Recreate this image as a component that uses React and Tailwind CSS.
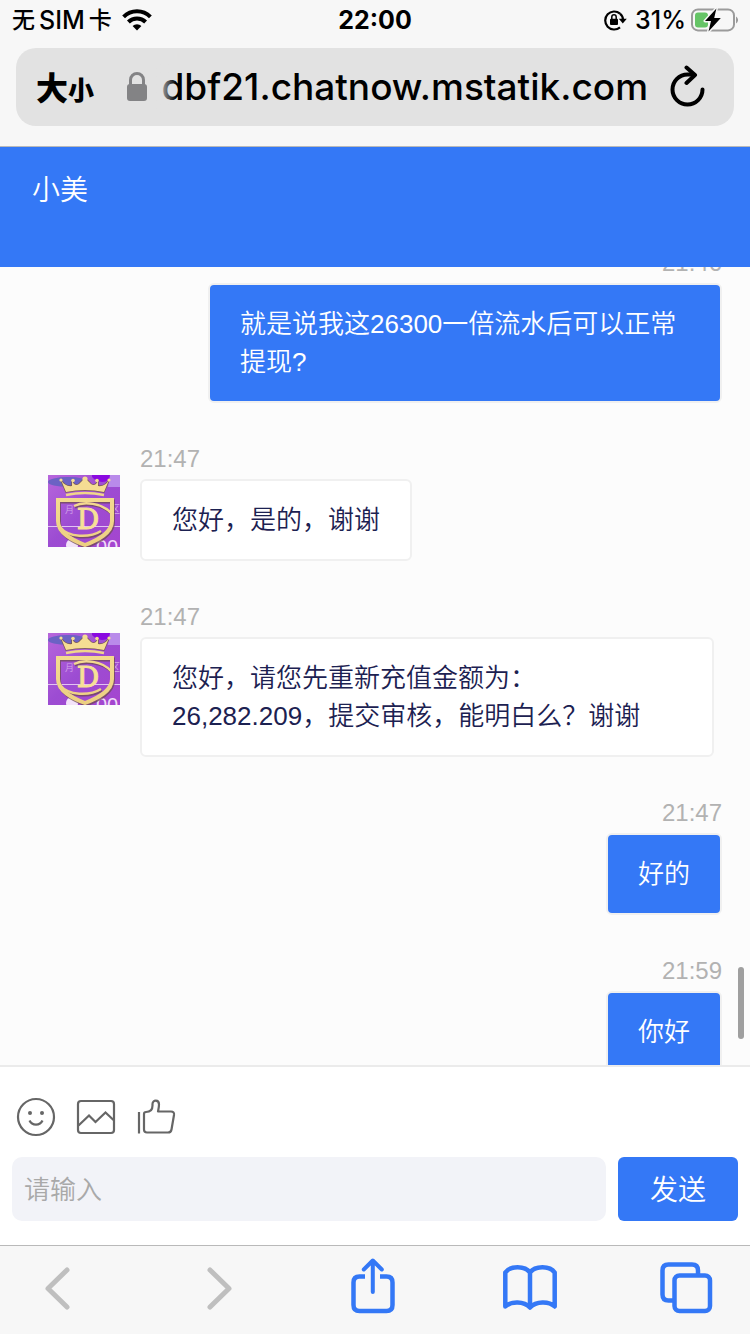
const messages = [
  { id: 1, own: true, time: '21:46', text: '就是说我这26300一倍流水后可以正常提现?' },
  { id: 2, own: false, time: '21:47', text: '您好，是的，谢谢' },
  { id: 3, own: false, time: '21:47', text: '您好，请您先重新充值金额为：26,282.209，提交审核，能明白么？谢谢' },
  { id: 4, own: true, time: '21:47', text: '好的' },
  { id: 5, own: true, time: '21:59', text: '你好' },
]

function StatusBar() {
  return (
    <div className="grid h-12 grid-cols-3 items-center px-3 pb-2 font-['Inter','Noto_Sans_CJK_SC',sans-serif] text-[25px] leading-8 font-medium text-black">
      <div className="flex items-center gap-2.5">
        <span className="flex gap-1 whitespace-nowrap">
          <span className="text-[23px]">无</span>
          <span>SIM</span>
          <span className="text-[23px]">卡</span>
        </span>
        <svg width="30" height="22" viewBox="0 0 30 22" fill="none" stroke="#000" strokeWidth="4">
          <path d="M1.6 7.8A19 19 0 0 1 28.4 7.8" />
          <path d="M6.4 13A12.2 12.2 0 0 1 23.6 13" />
          <path d="M15 21.5L10.6 17.1A6.3 6.3 0 0 1 19.4 17.1Z" fill="#000" stroke="none" />
        </svg>
      </div>
      <span className="text-center font-bold">22:00</span>
      <div className="flex items-center justify-end">
        <svg className="mr-2 shrink-0" width="24" height="22" viewBox="0 0 24 22" fill="none">
          <path d="M17 4.6A9 9 0 1 0 17 18.4" stroke="#000" strokeWidth="2.2" />
          <path d="M17 4.6Q20 7 20 11" stroke="#000" strokeWidth="2.2" />
          <path d="M15.8 9.8H23.8L19.8 14.4Z" fill="#000" />
          <rect x="7" y="9.8" width="8" height="6.2" rx="1" fill="#000" />
          <path d="M8.8 10V8A2.2 2.2 0 0 1 13.2 8V10" stroke="#000" strokeWidth="1.5" />
        </svg>
        <span>31%</span>
        <svg className="ml-1 shrink-0" width="48" height="24" viewBox="0 0 48 24">
          <rect x="2" y="1.4" width="42" height="21" rx="6" fill="none" stroke="#9b9b9b" strokeWidth="2" />
          <path d="M46 8.5A4 4 0 0 1 46 15.5Z" fill="#9b9b9b" />
          <rect x="5" y="4.4" width="13" height="15" rx="3" fill="#65c466" />
          <path d="M26.4 0.5L15 13H21L18.5 23.5L30.8 10H24.2Z" fill="#000" stroke="#f7f7f7" strokeWidth="3" paintOrder="stroke" strokeLinejoin="round" />
        </svg>
      </div>
    </div>
  )
}

function AddressBar() {
  return (
    <div className="mx-4 flex h-[78px] items-center rounded-[20px] bg-[#e2e2e2] px-5 text-black">
      <button className="flex shrink-0 items-baseline font-['Noto_Sans_CJK_SC',sans-serif] text-[32px] leading-10 font-black">
        大<span className="text-[26px]">小</span>
      </button>
      <svg className="ml-8 shrink-0" width="22" height="30" viewBox="0 0 22 30">
        <rect x="1" y="12" width="20" height="17" rx="3" fill="#838385" />
        <path d="M4.5 13V8A6.5 6.5 0 0 1 17.5 8V13" fill="none" stroke="#838385" strokeWidth="3" />
      </svg>
      <div className="relative ml-2 min-w-0 grow">
        <span className="flex justify-end font-['Inter',sans-serif] text-[37px] leading-[52px] font-medium whitespace-nowrap">
          dbf21.chatnow.mstatik.com
        </span>
        <span className="absolute inset-y-0 left-0 w-5 bg-linear-to-r from-[#e2e2e2] to-transparent" />
      </div>
      <button aria-label="刷新" className="mr-2 ml-5 shrink-0">
        <svg width="38" height="44" viewBox="0 0 38 44" fill="none" stroke="#000" strokeWidth="4" strokeLinecap="round" strokeLinejoin="round">
          <path d="M25 9.5H19.5A15 15 0 1 0 34.5 24.5" />
          <path d="M18.5 2.5L27 10L18.5 18" />
        </svg>
      </button>
    </div>
  )
}

function Avatar() {
  return (
    <svg className="mt-9 mr-5 shrink-0" width="72" height="72" viewBox="0 0 72 72">
      <defs>
        <linearGradient id="avatar-bg" x1="0" y1="0" x2="1" y2="1">
          <stop offset="0" stopColor="#b766dc" />
          <stop offset="0.5" stopColor="#9c4cd2" />
          <stop offset="1" stopColor="#a545cf" />
        </linearGradient>
        <linearGradient id="avatar-gold" x1="0" y1="0" x2="0" y2="72" gradientUnits="userSpaceOnUse">
          <stop offset="0" stopColor="#f7e096" />
          <stop offset="1" stopColor="#eccf82" />
        </linearGradient>
      </defs>
      <rect width="72" height="72" fill="url(#avatar-bg)" />
      <ellipse cx="20" cy="7" rx="20" ry="5" fill="#6b62c4" />
      <path d="M44 0H62V4C56 9 48 7 44 2Z" fill="#8a0ae0" />
      <path d="M62 0H72V12H60Z" fill="#b98bea" />
      <path d="M0 51.5H72" stroke="#e3c2f3" strokeWidth="1.2" />
      <text x="17" y="38" fontSize="9" fill="#d3a6ea" fontFamily="Noto Sans CJK SC, sans-serif">月</text>
      <text x="62" y="38" fontSize="10" fill="#d3a6ea" fontFamily="Noto Sans CJK SC, sans-serif">区</text>
      <circle cx="24" cy="70" r="6" fill="#f3e3fa" />
      <text x="48" y="79" fontSize="20" fill="#f0dcf8" fontFamily="Liberation Sans, sans-serif">00</text>
      <g fill="none" stroke="#6d4a52" strokeOpacity="0.75" transform="translate(1 1.5)">
        <path d="M10 25H64V46C64 58 50 65 37 70C24 65 10 58 10 46Z" strokeWidth="4" />
        <path d="M26 31C36 26 54 28 63 38M12 52C20 63 42 63 53 56" strokeWidth="2.5" />
      </g>
      <g fill="none" stroke="url(#avatar-gold)">
        <path d="M10 25H64V46C64 58 50 65 37 70C24 65 10 58 10 46Z" strokeWidth="4" />
        <path d="M26 31C36 26 54 28 63 38M12 52C20 63 42 63 53 56" strokeWidth="2.5" />
      </g>
      <path d="M18 17L13 5Q17 12 24 11L24 6Q27 12 31 9L37 3L43 9Q47 12 50 6L50 11Q57 12 61 5L56 17Q37 13 18 17Z" fill="#f5dd93" stroke="#7a5a55" strokeWidth="1.5" paintOrder="stroke" />
      <g fill="#f5dd93">
        <circle cx="13" cy="5" r="1.6" />
        <circle cx="25" cy="5.5" r="1.8" />
        <circle cx="37" cy="4" r="2.6" />
        <circle cx="49" cy="5.5" r="1.8" />
        <circle cx="61" cy="5" r="1.6" />
      </g>
      <path d="M18 20Q37 16 56 20" fill="none" stroke="#f0d68a" strokeWidth="2.5" />
      <text x="40" y="54" textAnchor="middle" fontSize="28" fill="#f7e096" stroke="#f7e096" strokeWidth="1" fontFamily="DejaVu Serif, serif">D</text>
    </svg>
  )
}

function Message({ own, time, text }) {
  return (
    <li className={own ? 'flex justify-end' : 'flex'}>
      {!own && <Avatar />}
      <div className={own ? 'flex max-w-[514px] flex-col items-end' : 'flex max-w-[574px] flex-col items-start'}>
        <time className="text-2xl leading-10 text-[#b2b2b2]">{time}</time>
        <p
          className={
            own
              ? 'rounded-md border-2 border-[#f0f0f0] bg-[#3478f6] px-[30px] py-5 text-[26px] leading-[38px] text-white'
              : 'rounded-md border-2 border-[#f0f0f0] bg-white px-[30px] py-5 text-[26px] leading-[38px] text-[#1c2151]'
          }
        >
          {text}
        </p>
      </div>
    </li>
  )
}

function Composer() {
  return (
    <form className="border-t-2 border-[#ebebeb] bg-white px-3 pt-[30px] pb-6" onSubmit={(e) => e.preventDefault()}>
      <div className="flex gap-5 px-1 text-[#666]">
        <button type="button" aria-label="表情">
          <svg width="40" height="40" viewBox="0 0 40 40" fill="none" stroke="currentColor" strokeWidth="2.2">
            <circle cx="20" cy="20" r="18" />
            <circle cx="14" cy="16" r="2" fill="currentColor" stroke="none" />
            <circle cx="26" cy="16" r="2" fill="currentColor" stroke="none" />
            <path d="M13.5 23.5C16 29 24 29 26.5 23.5" />
          </svg>
        </button>
        <button type="button" aria-label="图片">
          <svg width="40" height="40" viewBox="0 0 40 40" fill="none" stroke="currentColor" strokeWidth="2.2">
            <rect x="2" y="4" width="36" height="32" rx="3" />
            <path d="M2.5 28.5L13 18.5L19.5 25L29.5 15.5L37.5 23" />
          </svg>
        </button>
        <button type="button" aria-label="点赞">
          <svg width="40" height="40" viewBox="0 0 40 40" fill="none" stroke="currentColor" strokeWidth="2.2" strokeLinejoin="round">
            <path d="M3 15V36.5" />
            <path d="M8 17Q8 15 10 15C14 15 16.5 13 16.5 8.5V7C16.5 2.5 23 2.5 23 7.5C23 10 22.5 12 22 14.5H35Q38.5 14.5 38 18L35.5 32.5Q35 35.5 32 35.5H11Q8 35.5 8 32.5Z" />
          </svg>
        </button>
      </div>
      <div className="mt-5 flex gap-3">
        <input
          type="text"
          aria-label="请输入"
          placeholder="请输入"
          className="h-16 min-w-0 grow rounded-[10px] bg-[#f2f3f8] px-3 pt-0.5 text-[26px] outline-none placeholder:text-[#a9a9a9]"
        />
        <button type="submit" className="h-16 w-[120px] shrink-0 rounded-md bg-[#3478f6] pt-1 text-[28px] text-white">
          发送
        </button>
      </div>
    </form>
  )
}

function BrowserToolbar() {
  return (
    <nav className="flex h-[89px] items-center justify-between border-t border-[#b9b9b9] bg-[#f7f7f7] pr-9 pb-1 pl-[30px] text-[#3478f6]">
      <button aria-label="后退">
        <svg width="54" height="60" viewBox="0 0 54 60" fill="none" stroke="#bfbfbf" strokeWidth="5" strokeLinecap="round" strokeLinejoin="round">
          <path d="M37 12L18 30.5L37 49" />
        </svg>
      </button>
      <button aria-label="前进">
        <svg width="54" height="60" viewBox="0 0 54 60" fill="none" stroke="#bfbfbf" strokeWidth="5" strokeLinecap="round" strokeLinejoin="round">
          <path d="M22 12L41 30.5L22 49" />
        </svg>
      </button>
      <button aria-label="分享">
        <svg width="54" height="60" viewBox="0 0 54 60" fill="none" stroke="currentColor" strokeWidth="4.5" strokeLinejoin="round">
          <path d="M20 18.5H14.5Q8.5 18.5 8.5 24.5V47Q8.5 53 14.5 53H41.5Q47.5 53 47.5 47V24.5Q47.5 18.5 41.5 18.5H35" />
          <path d="M27.8 34V3M18.8 11.5L27.8 2.5L36.8 11.5" strokeWidth="4" strokeLinecap="round" />
        </svg>
      </button>
      <button aria-label="书签">
        <svg width="54" height="60" viewBox="0 0 54 60" fill="none" stroke="currentColor" strokeWidth="4.5" strokeLinejoin="round" strokeLinecap="round">
          <path d="M27 14.5C22 7.5 7 7.5 2.3 14.5V48.5C8 43 21 43 27 49.5C33 43 46 43 51.7 48.5V14.5C47 7.5 32 7.5 27 14.5ZM27 14.5V49" />
        </svg>
      </button>
      <button aria-label="标签页">
        <svg width="54" height="60" viewBox="0 0 54 60" fill="none" stroke="currentColor" strokeWidth="4.5" strokeLinejoin="round">
          <path d="M13 42.5H8.5Q2.5 42.5 2.5 36.5V12.5Q2.5 6.5 8.5 6.5H32Q38 6.5 38 12.5V17" />
          <rect x="14.5" y="17.5" width="35.5" height="35.5" rx="5" />
        </svg>
      </button>
    </nav>
  )
}

export default function App() {
  return (
    <div className="flex h-screen flex-col bg-[#fcfcfc] font-['Liberation_Sans','Noto_Sans_CJK_SC',sans-serif] font-[350]">
      <div className="shrink-0 border-b border-[#b9b9b9] bg-[#f7f7f7] pb-5">
        <StatusBar />
        <AddressBar />
      </div>

      <header className="h-[120px] shrink-0 bg-[#3478f6] px-8 pt-[26px]">
        <h1 className="text-[28px] leading-9 text-white">小美</h1>
      </header>

      <main className="relative min-h-0 grow overflow-hidden">
        <ul className="-mt-6 flex flex-col gap-9 pr-7 pl-12">
          {messages.map((m) => (
            <Message key={m.id} own={m.own} time={m.time} text={m.text} />
          ))}
        </ul>
        {/* scroll thumb */}
        <span className="absolute right-1.5 bottom-[26px] h-[72px] w-1.5 rounded-full bg-[#9f9f9f]" />
      </main>

      <div className="shrink-0">
        <Composer />
        <BrowserToolbar />
      </div>
    </div>
  )
}
